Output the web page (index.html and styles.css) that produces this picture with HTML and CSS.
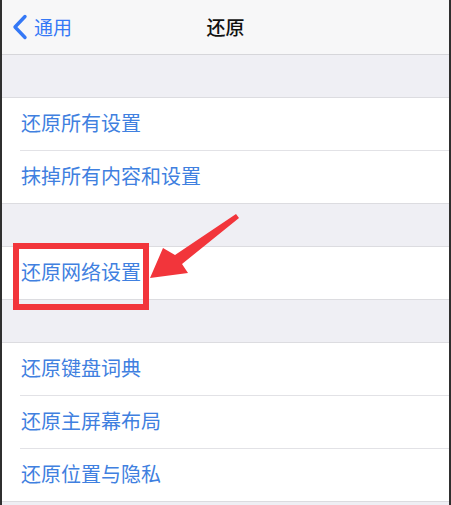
FILE: index.html
```html
<!DOCTYPE html>
<html lang="zh-CN">
<head>
  <meta charset="UTF-8">
  <title>还原</title>
  <meta name="viewport" content="width=device-width, initial-scale=1">
  <link rel="stylesheet" href="styles.css">
</head>
<body>

<div class="screen">
  <div class="navbar">
    <a class="back" href="#">
      <svg class="chevron" width="16" height="26" viewBox="0 0 16 26">
        <path d="M13 2.5 L3 13 L13 23.5" fill="none" stroke="#3478f6" stroke-width="3.4" stroke-linecap="round" stroke-linejoin="round"/>
      </svg>
      <span>通用</span>
    </a>
    <div class="title">还原</div>
  </div>

  <div class="gap"></div>
  <ul class="group">
    <li>还原所有设置</li>
    <li>抹掉所有内容和设置</li>
  </ul>

  <div class="gap"></div>
  <ul class="group">
    <li>还原网络设置</li>
  </ul>

  <div class="gap"></div>
  <ul class="group">
    <li>还原键盘词典</li>
    <li>还原主屏幕布局</li>
    <li>还原位置与隐私</li>
  </ul>

  <!-- 标注 -->
  <div class="mark-box"></div>
  <svg class="mark-arrow" width="90" height="70" viewBox="0 0 90 70">
    <polygon points="0,64 13,34 25,41 86,0 89,4 32,50 38,59" fill="#f2353b"/>
  </svg>
</div>

</body>
</html>
```

FILE: styles.css
```css
body {
  margin: 0;
  background: #2f2f2f;
  font-family: "Noto Sans CJK SC", "Noto Sans", sans-serif;
}

.screen {
  position: relative;
  width: 447px;
  height: 505px;
  overflow: hidden;
  margin-left: 2px;
  background: #efeff4;
}

.navbar {
  position: relative;
  height: 54px;
  background: #f7f7f8;
  border-bottom: 1px solid #d6d6da;
  display: flex;
  align-items: center;
}

.back {
  display: flex;
  align-items: center;
  gap: 6px;
  padding-left: 10px;
  padding-bottom: 2px;
  color: #3478f6;
  text-decoration: none;
  font-size: 19px;
}

.chevron {
  margin-top: 2px;
}

.title {
  position: absolute;
  left: 0;
  right: 0;
  padding-bottom: 2px;
  text-align: center;
  font-size: 19px;
  font-weight: 500;
  color: #111;
  pointer-events: none;
}

.gap {
  height: 42px;
}

.group {
  list-style: none;
  margin: 0;
  padding: 0;
  background: #fff;
  border-top: 1px solid #dcdce0;
  border-bottom: 1px solid #dcdce0;
}

.group li {
  height: 52px;
  box-sizing: border-box;
  padding-bottom: 3px;
  display: flex;
  align-items: center;
  padding-left: 19px;
  font-size: 20px;
  color: #4080e0;
}

.group li + li {
  border-top: 1px solid #e2e2e6;
  height: 53px;
  margin-left: 18px;
  padding-left: 1px;
}

.mark-box {
  position: absolute;
  left: 11px;
  top: 243px;
  width: 124px;
  height: 55px;
  border: 6px solid #f2353b;
}

.mark-arrow {
  position: absolute;
  left: 148px;
  top: 214px;
}
```
